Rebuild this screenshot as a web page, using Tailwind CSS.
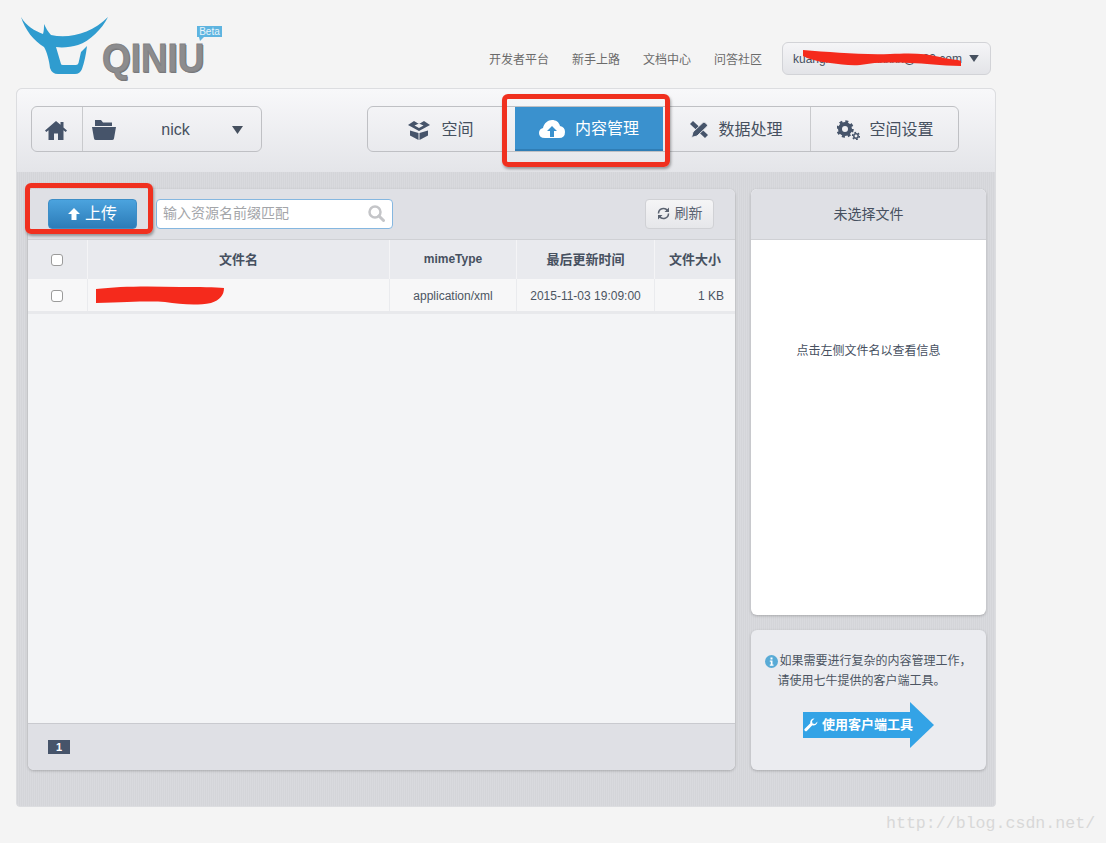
<!DOCTYPE html>
<html lang="zh">
<head>
<meta charset="utf-8">
<script src="https://cdn.jsdelivr.net/npm/@tailwindcss/browser@4"></script>
</head>
<body class="m-0 bg-[#f4f4f4]">
<div class="relative w-[1106px] h-[843px] overflow-hidden bg-[#f4f4f4] text-[#46505f] font-['Liberation_Sans','Noto_Sans_CJK_SC',sans-serif]">

  <!-- header -->
  <header class="h-[88px] flex justify-between pl-[20px] pr-[115px]">
    <div class="relative w-[210px] h-[88px]">
      <svg class="absolute left-0 top-0" width="100" height="80" viewBox="0 0 100 80"><path fill="#2f9ccf" d="M1 17C6 26 15 31 23 34C24 31 24 27 24 24C26 28 28 32 31 35C50 39 72 33 88 17C82 29 70 41 58 45C51 47 43 48 36 47L41 64Q41 65 43 65H56Q58 65 58.500 63L61 52L67 46C66 55 64 63 62 69Q60 74 55 74H38Q32 74 30 68C29 60 27 52 24 47C14 41 5 30 1 17Z"/></svg>
      <span class="absolute left-[82px] top-[35px] origin-left scale-x-[0.9] text-[41px] leading-[46px] font-bold text-[#8c8c8e] [-webkit-text-stroke:1px_#828284] [text-shadow:1px_1px_0_#6f6f71]">QINIU</span>
      <span class="absolute left-[177px] top-[26px] w-[25px] h-[11px] bg-[#5eb4e0] text-[#e8f4fb] text-[10px] leading-[12px] text-center">Beta</span>
      <svg class="absolute left-[179px] top-[37px]" width="5" height="4" viewBox="0 0 5 4"><path fill="#5eb4e0" d="M0 0h5L1 4z"/></svg>
    </div>
    <div class="flex items-center gap-[20px] pt-[30px] h-[88px]">
      <nav class="flex gap-[23px] text-[12px] text-[#6b6b6b] pt-[1px]">
        <a>开发者平台</a><a>新手上路</a><a>文档中心</a><a>问答社区</a>
      </nav>
      <div class="relative w-[209px] h-[33px] flex items-center justify-between pl-[10px] pr-[11px] mt-[-1px] rounded-md border border-[#d2d3d7] bg-gradient-to-b from-[#f5f5f7] to-[#e3e4e8] text-[12px]">
        <span>kuangxxxxxxxxxxxxx@163.com</span>
        <svg width="10" height="7" viewBox="0 0 11 8"><path fill="#46505f" d="M0 0h11L5.500 8z"/></svg>
      </div>
    </div>
  </header>

  <!-- main card -->
  <main class="ml-[16px] w-[980px] h-[719px] rounded-t-md rounded-b-sm border border-[#dcdde0] bg-[#d6d7db] bg-[repeating-linear-gradient(90deg,#d4d5d9_0_1px,#d9dade_1px_2px)] overflow-hidden">
    <!-- top bar -->
    <div class="h-[83px] flex items-start gap-[105px] pl-[14px] pt-[17px] bg-gradient-to-b from-[#f8f8fa] to-[#e4e5e9]">
      <div class="w-[231px] h-[46px] flex rounded-md border border-[#bfc0c4]">
        <div class="w-[51px] flex items-center justify-center pr-[2px] pt-[1px] border-r border-[#c9cacd]">
          <svg width="22" height="20" viewBox="0 0 22 20"><path fill="#46546a" d="M11 1 0 10.500 1.300 12 3.500 10.200V20H9v-6.500h4V20h5.500V10.200L20.700 12 22 10.500 18.500 7.400V2h-3v2.800z"/></svg>
        </div>
        <div class="flex-1 flex items-center text-[16px] pl-[9px] pr-[18px] pt-[1px]">
          <svg width="24" height="20" viewBox="0 0 24 20"><path fill="#46546a" d="M3 0h6l2 2.500h9V6H3zM0 7h24l-2 11.500q-.3 1.500-2 1.500H4q-1.700 0-2-1.500z"/></svg>
          <span class="flex-1 text-center pl-[16px] pr-[13px]">nick</span>
          <svg width="11" height="8" viewBox="0 0 11 8"><path fill="#46505f" d="M0 0h11L5.500 8z"/></svg>
        </div>
      </div>
      <div class="w-[592px] h-[46px] grid grid-cols-[139px_156px_148px_149px] rounded-md border border-[#bfc0c4] text-[16px]">
        <div class="flex items-center justify-center gap-[11px] pl-[7px] pt-[1px]">
          <svg width="22" height="20" viewBox="0 0 22 20"><path fill="#46546a" fill-rule="evenodd" d="M0 5 6 1 11 4 16 1 22 5 11 11zM6.500 5.500 11 8 15.500 5.500 11 3.500z"/><path fill="#46546a" d="M2 10.500 10.500 13V20L2 15.500zM20 10.500 11.500 13V20L20 15.500z"/></svg>
          <span>空间</span>
        </div>
        <div class="flex items-center">
          <div class="ml-[8px] w-[148px] h-[44px] flex items-center justify-center gap-[10px] pt-[2px] bg-[#3a91ce] border-b-2 border-[#2f7db5] text-white">
            <svg width="26" height="18" viewBox="0 0 26 18"><path fill="#fff" d="M6 18Q0 18 0 13q0-4 4-5C5 3 9 0 13 0c4 0 7 2 8 6q5 1 5 6 0 6-6 6z"/><path fill="#3a91ce" d="M13 6l5 5h-3v6h-4v-6H8z"/></svg>
            <span>内容管理</span>
          </div>
        </div>
        <div class="flex items-center justify-center gap-[10px] pt-[1px] border-r border-[#c9cacd]">
          <svg width="18" height="17" viewBox="0 0 18 17"><path fill="#46546a" d="M0 3 3 0 18 14 15 17z"/><path fill="#46546a" stroke="#e9eaee" stroke-width="1" d="M1.500 16.500 3 11 13 1.500Q14 .5 15 1.500L17 3.500Q18 4.500 17 5.500L7 15z"/></svg>
          <span>数据处理</span>
        </div>
        <div class="flex items-center justify-center gap-[9px] pt-[1px]">
          <svg width="23" height="20" viewBox="0 0 23 20"><circle cx="8" cy="9" r="5" fill="none" stroke="#46546a" stroke-width="4"/><circle cx="8" cy="9" r="7.500" fill="none" stroke="#46546a" stroke-width="2.500" stroke-dasharray="3 2.900"/><circle cx="19" cy="16" r="2.200" fill="none" stroke="#46546a" stroke-width="1.500"/><circle cx="19" cy="16" r="3.500" fill="none" stroke="#46546a" stroke-width="1.300" stroke-dasharray="1.800 1.800"/></svg>
          <span>空间设置</span>
        </div>
      </div>
    </div>

    <!-- content -->
    <div class="flex gap-[16px] pl-[11px] pt-[17px]">
      <!-- left panel -->
      <section class="w-[707px] h-[581px] flex flex-col rounded-md overflow-hidden bg-[#f3f4f6] shadow-[0_1px_3px_rgba(0,0,0,0.22)]">
        <div class="h-[51px] shrink-0 flex items-center pl-[20px] pr-[21px] pb-[1px] bg-[#dfe0e5] border-b border-[#cfd0d4]">
          <button class="w-[89px] h-[30px] flex items-center justify-center gap-[5px] rounded-sm border border-[#3d8dc6] bg-gradient-to-b from-[#4ba3de] to-[#2c7cb8] text-white text-[16px]">
            <svg width="12" height="12" viewBox="0 0 12 12"><path fill="#fff" d="M6 0l6 6H8.500v6h-5V6H0z"/></svg>
            <span>上传</span>
          </button>
          <div class="ml-[19px] w-[237px] h-[30px] flex items-center justify-between pl-[6px] pr-[7px] rounded-sm border border-[#85b7e0] bg-white text-[14px] text-[#a3a5a9]">
            <span>输入资源名前缀匹配</span>
            <svg width="17" height="17" viewBox="0 0 17 17"><circle cx="7" cy="7" r="5.500" fill="none" stroke="#c4c5c8" stroke-width="2.500"/><path stroke="#c4c5c8" stroke-width="3" stroke-linecap="round" d="M11 11l4.500 4.500"/></svg>
          </div>
          <button class="ml-auto w-[69px] h-[30px] flex items-center justify-center gap-[5px] rounded-sm border border-[#d0d1d5] bg-gradient-to-b from-[#f5f5f6] to-[#e6e7ea] text-[14px] text-[#5a6270]">
            <svg width="13" height="13" viewBox="0 0 13 13"><path fill="none" stroke="#5a6270" stroke-width="1.500" d="M1.500 6.500A5 5 0 0 1 10.500 3.500M11.500 6.500A5 5 0 0 1 2.500 9.500"/><path fill="#5a6270" d="M12 .5v4.500H7.500zM1 12.500V8h4.500z"/></svg>
            <span>刷新</span>
          </button>
        </div>
        <div class="grid grid-cols-[60px_302px_127px_138px_80px] h-[39px] shrink-0 bg-[#e9eaee] text-[13px] font-bold text-[#46505f]">
          <div class="flex items-center justify-center pr-[2px] border-r border-[#f4f4f6]"><span class="w-[12px] h-[12px] rounded-[3px] border border-[#9b9b9b] bg-white"></span></div>
          <div class="flex items-center justify-center border-r border-[#f4f4f6]">文件名</div>
          <div class="flex items-center justify-center border-r border-[#f4f4f6] pb-[1px] text-[12px]">mimeType</div>
          <div class="flex items-center justify-center border-r border-[#f4f4f6]">最后更新时间</div>
          <div class="flex items-center justify-center">文件大小</div>
        </div>
        <div class="grid grid-cols-[60px_302px_127px_138px_80px] h-[35px] shrink-0 bg-[#f7f7f8] border-b-[3px] border-[#e8e9ec] text-[12px] text-[#4c5562]">
          <div class="flex items-center justify-center pr-[2px] pt-[1px] border-r border-[#eaebee]"><span class="w-[12px] h-[12px] rounded-[3px] border border-[#9b9b9b] bg-white"></span></div>
          <div class="border-r border-[#eaebee]"></div>
          <div class="flex items-center justify-center pt-[1px] border-r border-[#eaebee]">application/xml</div>
          <div class="flex items-center justify-center pt-[1px] border-r border-[#eaebee]">2015-11-03 19:09:00</div>
          <div class="flex items-center justify-end pt-[1px] pr-[11px]">1 KB</div>
        </div>
        <div class="flex-1"></div>
        <div class="h-[47px] shrink-0 flex items-center pl-[20px] bg-[#dfe0e5] border-t border-[#c9cacf]">
          <span class="w-[22px] h-[14px] bg-[#46546a] text-white text-[11px] leading-[14px] font-bold text-center">1</span>
        </div>
      </section>

      <!-- right column -->
      <aside class="w-[235px] flex flex-col gap-[15px]">
        <section class="h-[426px] flex flex-col rounded-md overflow-hidden bg-white shadow-[0_1px_3px_rgba(0,0,0,0.22)]">
          <div class="h-[51px] shrink-0 flex items-center justify-center bg-[#dfe0e5] border-b border-[#cfd0d4] text-[14px]">未选择文件</div>
          <div class="flex-1 flex justify-center pt-[103px] text-[12px] leading-[16px]">点击左侧文件名以查看信息</div>
        </section>
        <section class="h-[140px] flex flex-col items-center rounded-md bg-[#ebecf0] shadow-[0_1px_3px_rgba(0,0,0,0.22)] pt-[21px]">
          <div class="w-[214px] pl-[3px] text-[12px] leading-[20px] text-[#4c5562]">
            <div class="flex items-center gap-[2px]">
              <svg class="shrink-0" width="13" height="13" viewBox="0 0 13 13"><circle cx="6.500" cy="6.500" r="6.500" fill="#59abd6"/><path fill="#fff" d="M5.500 2.500h2v2h-2zM4.800 5.500h2.700v4h1v1.200H4.800V9.500h1V6.700h-1z"/></svg>
              <span class="whitespace-nowrap">如果需要进行复杂的内容管理工作，</span>
            </div>
            <div class="pl-[13px]">请使用七牛提供的客户端工具。</div>
          </div>
          <div class="relative mt-[11px] w-[131px] h-[46px] flex items-center">
            <div class="w-[107px] h-[26px] flex items-center gap-[4px] pl-[1px] bg-[#33a3e6] text-white text-[13px] font-bold whitespace-nowrap">
              <svg class="shrink-0" width="14" height="14" viewBox="0 0 14 14"><path fill="#fff" d="M13.500 3.500a4 4 0 0 1-5.200 3.800L3 12.800a1.500 1.500 0 0 1-2.200-2.100l5.500-5.400A4 4 0 0 1 10.500.5L8 3l.5 2.500L11 6z"/></svg>
              <span class="relative z-10">使用客户端工具</span>
            </div>
            <svg class="shrink-0" width="24" height="46" viewBox="0 0 24 46"><path fill="#33a3e6" d="M0 0l24 23L0 46z"/></svg>
          </div>
        </section>
      </aside>
    </div>
  </main>

  <!-- annotations laid over the screenshot -->
  <svg class="absolute left-[790px] top-[45px]" width="180" height="24" viewBox="0 0 180 24"><path fill="#f52a1c" d="M13 5C40 7 70 10 100 9 120 8 135 8 150 12 160 15 168 14 171 16V21C150 21 135 18 120 18 100 17 85 17 70 20 60 21 50 19 40 18 30 17 18 14 13 11z"/></svg>
  <svg class="absolute left-[90px] top-[282px]" width="140" height="26" viewBox="0 0 140 26"><path fill="#f52a1c" d="M6 7C30 4 60 4 90 5 110 5 125 5 134 6 134 13 130 18 121 21 105 24 90 22 75 20 60 19 40 20 6 21z"/></svg>
  <div class="absolute left-[502px] top-[94px] w-[168px] h-[73px] rounded-[6px] border-[5px] border-[#f0301f] shadow-[1px_2px_3px_rgba(0,0,0,0.35)]"></div>
  <div class="absolute left-[25px] top-[183px] w-[128px] h-[51px] rounded-[6px] border-[5px] border-[#f0301f] shadow-[1px_2px_3px_rgba(0,0,0,0.35)]"></div>
  <span class="absolute left-[886px] top-[814px] font-['Liberation_Mono',monospace] text-[16.6px] leading-[20px] text-[#d8d8d8]">http://blog.csdn.net/</span>
</div>
</body>
</html>
